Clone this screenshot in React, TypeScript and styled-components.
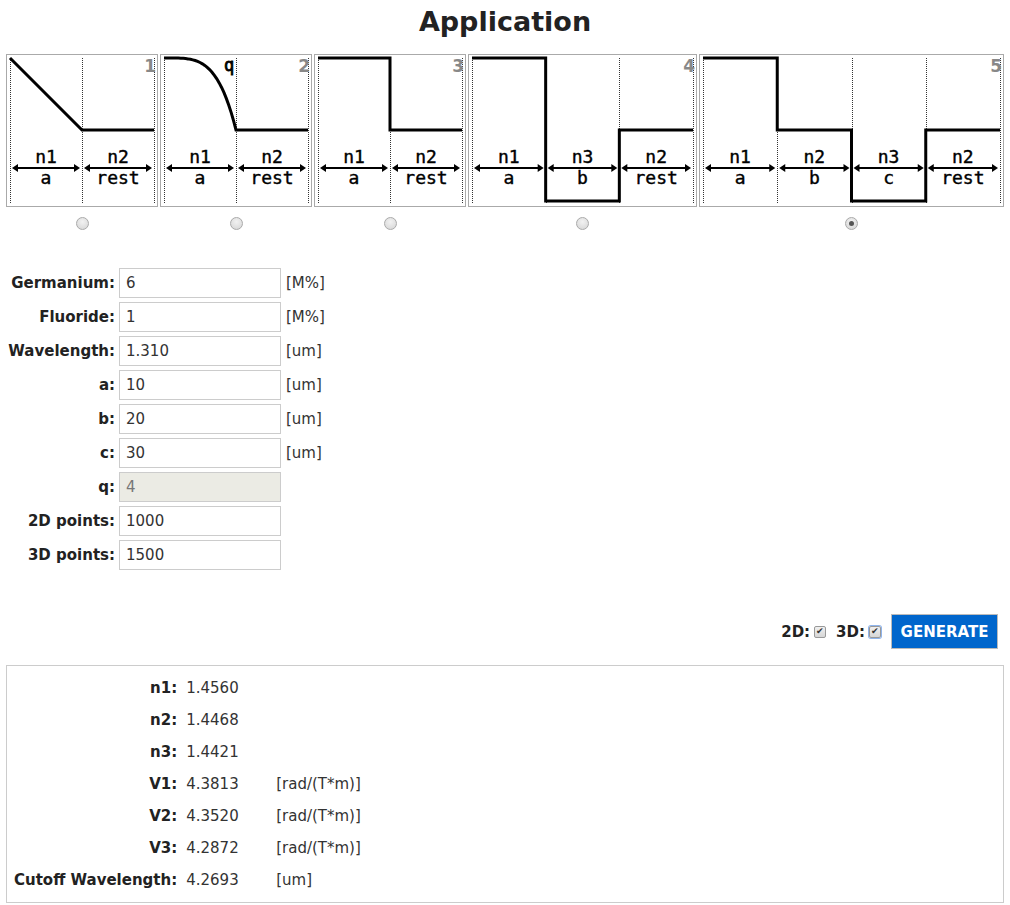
import React from "react";
import styled, { createGlobalStyle } from "styled-components";

const GlobalStyle = createGlobalStyle`
  body {
    margin: 0;
    background: #fff;
    font-family: "DejaVu Sans", "Noto Sans", sans-serif;
    color: #222;
  }
`;

type Level = "high" | "mid" | "low";

type ProfileDef = {
  id: number;
  width: number;
  top: string[];
  bottom: string[];
  levels?: Level[];
  kind: "step" | "linear" | "power";
};

const profiles: ProfileDef[] = [
  { id: 1, width: 152, top: ["n1", "n2"], bottom: ["a", "rest"], kind: "linear" },
  { id: 2, width: 152, top: ["n1", "n2"], bottom: ["a", "rest"], kind: "power" },
  { id: 3, width: 152, top: ["n1", "n2"], bottom: ["a", "rest"], kind: "step", levels: ["high", "mid"] },
  { id: 4, width: 229, top: ["n1", "n3", "n2"], bottom: ["a", "b", "rest"], kind: "step", levels: ["high", "low", "mid"] },
  { id: 5, width: 305, top: ["n1", "n2", "n3", "n2"], bottom: ["a", "b", "c", "rest"], kind: "step", levels: ["high", "mid", "low", "mid"] },
];

const levelY: Record<Level, number> = { high: 3, mid: 75, low: 146 };

const params = [
  { label: "Germanium:", value: "6", unit: "[M%]" },
  { label: "Fluoride:", value: "1", unit: "[M%]" },
  { label: "Wavelength:", value: "1.310", unit: "[um]" },
  { label: "a:", value: "10", unit: "[um]" },
  { label: "b:", value: "20", unit: "[um]" },
  { label: "c:", value: "30", unit: "[um]" },
  { label: "q:", value: "4", unit: "", disabled: true },
  { label: "2D points:", value: "1000", unit: "" },
  { label: "3D points:", value: "1500", unit: "" },
];

const results = [
  { label: "n1:", value: "1.4560", unit: "" },
  { label: "n2:", value: "1.4468", unit: "" },
  { label: "n3:", value: "1.4421", unit: "" },
  { label: "V1:", value: "4.3813", unit: "[rad/(T*m)]" },
  { label: "V2:", value: "4.3520", unit: "[rad/(T*m)]" },
  { label: "V3:", value: "4.2872", unit: "[rad/(T*m)]" },
  { label: "Cutoff Wavelength:", value: "4.2693", unit: "[um]" },
];

const ProfileDrawing: React.FC<{ def: ProfileDef }> = ({ def }) => {
  const w = def.width - 2;
  const h = 151;
  const n = def.top.length;
  const left = 3;
  const right = w - 3;
  const seg = (right - left) / n;
  const bounds = Array.from({ length: n + 1 }, (_, i) => left + seg * i);

  let path = "";
  if (def.kind === "step" && def.levels) {
    const pts: string[] = [];
    def.levels.forEach((lv, i) => {
      const y = levelY[lv];
      pts.push(`${bounds[i]},${y}`, `${bounds[i + 1]},${y}`);
    });
    path = "M" + pts.join(" L");
  } else if (def.kind === "linear") {
    path = `M${left},${levelY.high} L${bounds[1]},${levelY.mid} L${right},${levelY.mid}`;
  } else {
    // graded profile, exponent q = 4
    const pts: string[] = [];
    for (let i = 0; i <= 30; i++) {
      const t = i / 30;
      const x = left + t * (bounds[1] - left);
      const y = levelY.high + (levelY.mid - levelY.high) * Math.pow(t, 4);
      pts.push(`${x.toFixed(2)},${y.toFixed(2)}`);
    }
    pts.push(`${right},${levelY.mid}`);
    path = "M" + pts.join(" L");
  }

  const arrowY = 113;

  return (
    <svg width={w} height={h} viewBox={`0 0 ${w} ${h}`}>
      {bounds.map((x) => (
        <line key={x} x1={Math.round(x) + 0.5} y1={3} x2={Math.round(x) + 0.5} y2={148} stroke="#333" strokeWidth={1} strokeDasharray="1 1" />
      ))}
      <path d={path} fill="none" stroke="#000" strokeWidth={3} strokeLinejoin="miter" />
      {def.top.map((t, i) => {
        const x1 = bounds[i] + 2;
        const x2 = bounds[i + 1] - 2;
        const cx = (bounds[i] + bounds[i + 1]) / 2;
        return (
          <g key={i}>
            <line x1={x1 + 4} y1={arrowY} x2={x2 - 4} y2={arrowY} stroke="#000" strokeWidth={2} />
            <polygon points={`${x1},${arrowY} ${x1 + 6},${arrowY - 4} ${x1 + 6},${arrowY + 4}`} fill="#000" />
            <polygon points={`${x2},${arrowY} ${x2 - 6},${arrowY - 4} ${x2 - 6},${arrowY + 4}`} fill="#000" />
            <DiagramText x={cx} y={108} textAnchor="middle">{t}</DiagramText>
            <DiagramText x={cx} y={129} textAnchor="middle">{def.bottom[i]}</DiagramText>
          </g>
        );
      })}
      {def.kind === "power" && (
        <QLabel x={68} y={16} textAnchor="middle">q</QLabel>
      )}
      <ProfileNumber x={w - 1} y={17} textAnchor="end">{def.id}</ProfileNumber>
    </svg>
  );
};

export default function App() {
  return (
    <Page>
      <GlobalStyle />
      <Title>Application</Title>
      <ProfilesRow>
        {profiles.map((p) => (
          <ProfileColumn key={p.id}>
            <ProfileBox $width={p.width}>
              <ProfileDrawing def={p} />
            </ProfileBox>
            <Radio type="radio" name="profile" defaultChecked={p.id === 5} />
          </ProfileColumn>
        ))}
      </ProfilesRow>

      <ParamsGrid>
        {params.map((p) => (
          <React.Fragment key={p.label}>
            <ParamLabel>{p.label}</ParamLabel>
            <ParamInput defaultValue={p.value} disabled={p.disabled} />
            <Unit>{p.unit}</Unit>
          </React.Fragment>
        ))}
      </ParamsGrid>

      <ActionBar>
        <CheckLabel>
          2D: <CheckBox type="checkbox" defaultChecked />
        </CheckLabel>
        <CheckLabel>
          3D: <CheckBox type="checkbox" defaultChecked $focused />
        </CheckLabel>
        <GenerateButton>Generate</GenerateButton>
      </ActionBar>

      <ResultsBox>
        {results.map((r) => (
          <React.Fragment key={r.label}>
            <ResultLabel>{r.label}</ResultLabel>
            <ResultValue>{r.value}</ResultValue>
            <ResultUnit>{r.unit}</ResultUnit>
          </React.Fragment>
        ))}
      </ResultsBox>
    </Page>
  );
}

const Page = styled.div`
  padding: 0 6px 4px;
`;

const Title = styled.h1`
  margin: 0;
  height: 54px;
  line-height: 44px;
  text-align: center;
  font-size: 27px;
  font-weight: bold;
  color: #222;
`;

const ProfilesRow = styled.div`
  display: flex;
  gap: 2px;
`;

const ProfileColumn = styled.div`
  display: flex;
  flex-direction: column;
  align-items: center;
`;

const ProfileBox = styled.div<{ $width: number }>`
  width: ${(p) => p.$width}px;
  height: 153px;
  box-sizing: border-box;
  border: 1px solid #aaa;
  display: flex;

  svg {
    display: block;
  }
`;

const DiagramText = styled.text`
  font-family: "DejaVu Sans Mono", monospace;
  font-size: 18px;
  fill: #000;
  stroke: #000;
  stroke-width: 0.4px;
`;

const QLabel = styled(DiagramText)`
  font-size: 17px;
  stroke-width: 0.8px;
`;

const ProfileNumber = styled.text`
  font-family: "DejaVu Sans", sans-serif;
  font-weight: bold;
  font-size: 17px;
  fill: #888;
`;

const Radio = styled.input`
  appearance: none;
  box-sizing: border-box;
  margin: 10px 0 0;
  width: 13px;
  height: 13px;
  border-radius: 50%;
  border: 1px solid #aaa;
  background: radial-gradient(circle at 50% 35%, #f2f2f2, #d4d4d4);
  display: grid;
  place-items: center;

  &:checked::after {
    content: "";
    width: 5px;
    height: 5px;
    border-radius: 50%;
    background: #555;
  }
`;

const ParamsGrid = styled.div`
  display: grid;
  grid-template-columns: 109px 162px auto;
  column-gap: 4px;
  row-gap: 4px;
  margin-top: 38px;
  align-items: center;
`;

const ParamLabel = styled.label`
  text-align: right;
  font-weight: bold;
  font-size: 15px;
  color: #222;
`;

const ParamInput = styled.input`
  box-sizing: border-box;
  width: 162px;
  height: 30px;
  border: 1px solid #ccc;
  padding: 0 6px;
  font-family: "DejaVu Sans", sans-serif;
  font-size: 15px;
  color: #333;
  background: #fff;
  outline: none;

  &:disabled {
    background: #ebebe4;
    color: #777;
  }
`;

const Unit = styled.span`
  padding-left: 1px;
  font-size: 15px;
  color: #333;
`;

const ActionBar = styled.div`
  display: flex;
  justify-content: flex-end;
  align-items: center;
  gap: 10px;
  margin-top: 44px;
  margin-right: 6px;
`;

const CheckLabel = styled.label`
  display: flex;
  align-items: center;
  font-weight: bold;
  font-size: 15px;
  color: #222;
`;

const CheckBox = styled.input<{ $focused?: boolean }>`
  appearance: none;
  box-sizing: border-box;
  margin: 0 0 0 4px;
  width: 12px;
  height: 12px;
  border: 1px solid #999;
  border-radius: 2px;
  background: linear-gradient(#f0f0f0, #d6d6d6);
  display: grid;
  place-items: center;
  box-shadow: ${(p) => (p.$focused ? "0 0 0 1px #8fb4ec" : "none")};

  &:checked::after {
    content: "✔";
    font-size: 9px;
    line-height: 1;
    color: #333;
  }
`;

const GenerateButton = styled.button`
  width: 107px;
  height: 35px;
  border: 1px solid #bbb;
  background: #0066cc;
  color: #fff;
  font-family: "DejaVu Sans", sans-serif;
  font-weight: bold;
  font-size: 15px;
  text-transform: uppercase;
  cursor: pointer;
`;

const ResultsBox = styled.div`
  margin-top: 16px;
  border: 1px solid #ccc;
  padding: 6px 7px;
  display: grid;
  grid-template-columns: max-content 81px auto;
  grid-auto-rows: 32px;
  column-gap: 9px;
  align-items: center;
`;

const ResultLabel = styled.div`
  text-align: right;
  font-weight: bold;
  font-size: 15px;
  color: #222;
`;

const ResultValue = styled.div`
  font-size: 15px;
  color: #333;
`;

const ResultUnit = styled.div`
  font-size: 15px;
  color: #333;
`;
